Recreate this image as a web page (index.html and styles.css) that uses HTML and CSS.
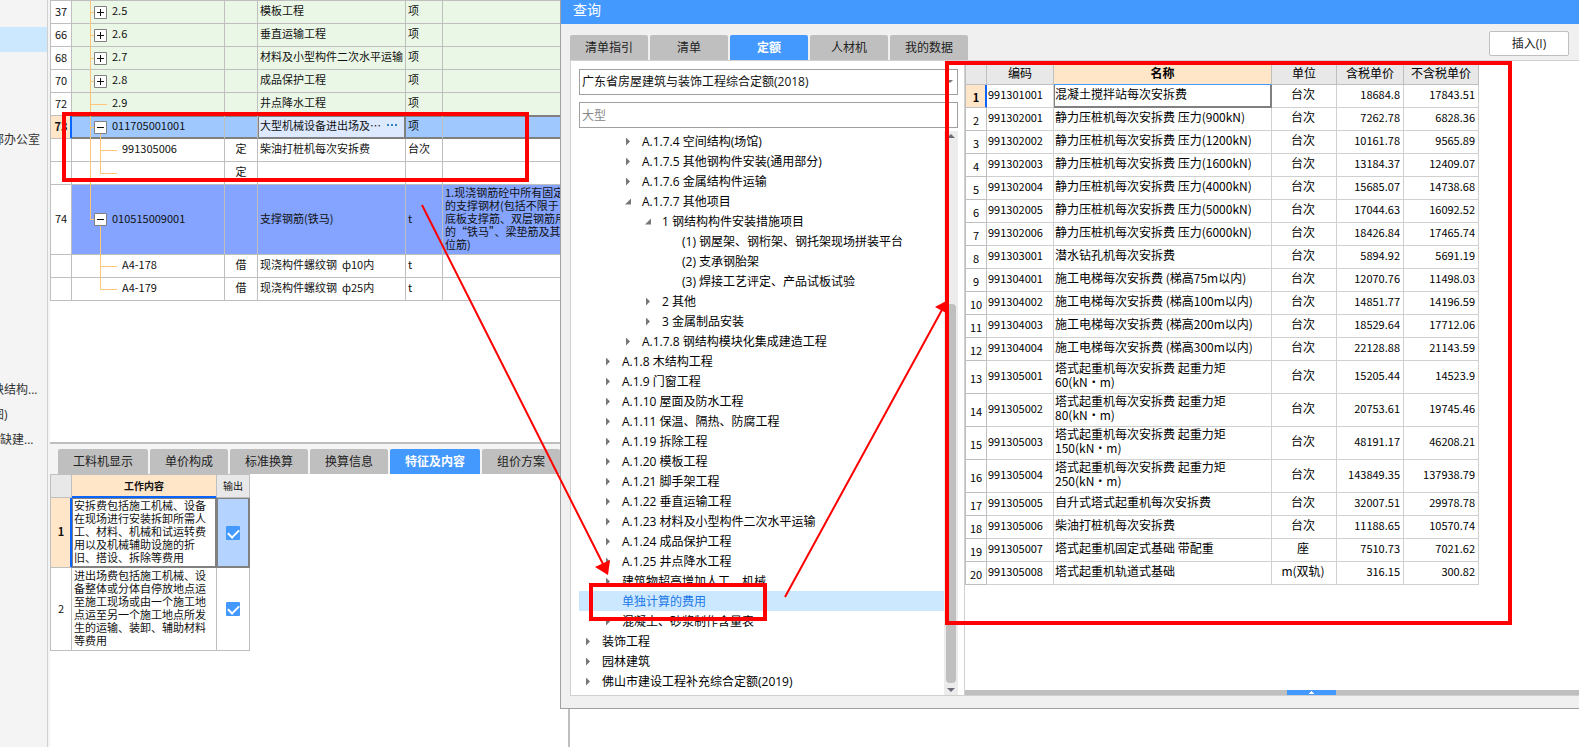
FILE: index.html
```html
<!DOCTYPE html>
<html lang="zh-CN">
<head>
<meta charset="utf-8">
<title>查询</title>
<link rel="stylesheet" href="styles.css">
</head>
<body>
<svg class="defs" aria-hidden="true">
  <symbol id="t-plus" viewBox="0 0 40 23"><path class="ln" d="M18.5 0V23M18.5 11.5H22"/><path class="bx" d="M22.5 5.5h12v12h-12z"/><path class="sg" d="M25 11.5h7M28.5 8v7"/></symbol>
  <symbol id="t-leaf" viewBox="0 0 40 23"><path class="ln" d="M18.5 0V23M18.5 11.5H35"/></symbol>
  <symbol id="t-open" viewBox="0 0 40 23"><path class="ln" d="M18.5 0V23M18.5 11.5H22M28.5 18V23"/><path class="bx" d="M22.5 5.5h12v12h-12z"/><path class="sg" d="M25 11.5h7"/></symbol>
  <symbol id="t-mid" viewBox="0 0 50 23"><path class="ln" d="M18.5 0V23M28.5 0V23M28.5 11.5H45"/></symbol>
  <symbol id="t-end" viewBox="0 0 50 23"><path class="ln" d="M18.5 0V23M28.5 0V11.5H45"/></symbol>
  <symbol id="t-tall" viewBox="0 0 40 70"><path class="ln" d="M18.5 0V34.500H22M28.5 41V70"/><path class="bx" d="M22.5 28.5h12v12h-12z"/><path class="sg" d="M25 34.5h7"/></symbol>
  <symbol id="t-sub" viewBox="0 0 50 23"><path class="ln" d="M28.5 0V23M28.5 11.5H45"/></symbol>
  <symbol id="t-last" viewBox="0 0 50 23"><path class="ln" d="M28.5 0V11.5H45"/></symbol>
</svg>

<div class="app">
  <nav class="side">
    <ul>
      <li></li><li class="on"></li><li></li><li></li><li></li>
      <li>部办公室</li><li></li><li></li><li></li><li></li>
      <li></li><li></li><li></li><li></li><li></li>
      <li>缺结构...</li><li>图)</li><li class="in">缺建...</li>
    </ul>
  </nav>

  <main class="work">
    <section class="upper">
      <table class="grid items">
        <colgroup><col class="c-no"><col class="c-code"><col class="c-type"><col class="c-name"><col class="c-unit"><col class="c-desc"></colgroup>
        <tbody>
          <tr class="green"><th>37</th><td class="tree"><div><svg class="w40"><use href="#t-plus"/></svg>2.5</div></td><td></td><td>模板工程</td><td>项</td><td></td></tr>
          <tr class="green"><th>66</th><td class="tree"><div><svg class="w40"><use href="#t-plus"/></svg>2.6</div></td><td></td><td>垂直运输工程</td><td>项</td><td></td></tr>
          <tr class="green"><th>68</th><td class="tree"><div><svg class="w40"><use href="#t-plus"/></svg>2.7</div></td><td></td><td>材料及小型构件二次水平运输</td><td>项</td><td></td></tr>
          <tr class="green"><th>70</th><td class="tree"><div><svg class="w40"><use href="#t-plus"/></svg>2.8</div></td><td></td><td>成品保护工程</td><td>项</td><td></td></tr>
          <tr class="green"><th>72</th><td class="tree"><div><svg class="w40"><use href="#t-leaf"/></svg>2.9</div></td><td></td><td>井点降水工程</td><td>项</td><td></td></tr>
          <tr class="current"><th>73</th><td class="tree"><div><svg class="w40"><use href="#t-open"/></svg>011705001001</div></td><td></td><td class="edit"><div>大型机械设备进出场及…<button type="button" class="more" aria-label="更多"><svg viewBox="0 0 11 3"><path d="M0 0h2v2H0zM4 0h2v2H4zM8 0h2v2H8z"/></svg></button></div></td><td>项</td><td></td></tr>
          <tr><th></th><td class="tree"><div><svg class="w50"><use href="#t-mid"/></svg>991305006</div></td><td>定</td><td>柴油打桩机每次安拆费</td><td>台次</td><td></td></tr>
          <tr><th></th><td class="tree"><div><svg class="w50"><use href="#t-end"/></svg></div></td><td>定</td><td></td><td></td><td></td></tr>
          <tr class="blue"><th>74</th><td class="tree"><div><svg class="w40 tall"><use href="#t-tall"/></svg>010515009001</div></td><td></td><td>支撑钢筋(铁马)</td><td>t</td><td>1.现浇钢筋砼中所有固定位置<br>的支撑钢材(包括不限于<br>底板支撑筋、双层钢筋用<br>的“铁马”、梁垫筋及其定<br>位筋)</td></tr>
          <tr><th></th><td class="tree"><div><svg class="w50"><use href="#t-sub"/></svg>A4-178</div></td><td>借</td><td>现浇构件螺纹钢 &nbsp;ф10内</td><td>t</td><td></td></tr>
          <tr><th></th><td class="tree"><div><svg class="w50"><use href="#t-last"/></svg>A4-179</div></td><td>借</td><td>现浇构件螺纹钢 &nbsp;ф25内</td><td>t</td><td></td></tr>
        </tbody>
      </table>
    </section>

    <div class="lower">
      <section class="detail">
        <div class="tabs">
          <button type="button">工料机显示</button><button type="button">单价构成</button><button type="button">标准换算</button><button type="button">换算信息</button><button type="button" class="on">特征及内容</button><button type="button">组价方案</button>
        </div>
        <table class="grid scope">
          <colgroup><col class="c-no"><col class="c-text"><col class="c-out"></colgroup>
          <thead><tr><th></th><th class="hot">工作内容</th><th>输出</th></tr></thead>
          <tbody>
            <tr class="picked"><th>1</th><td>安拆费包括施工机械、设备在现场进行安装拆卸所需人工、材料、机械和试运转费用以及机械辅助设施的折旧、搭设、拆除等费用</td><td><input type="checkbox" checked aria-label="输出 1"></td></tr>
            <tr class="second"><th>2</th><td>进出场费包括施工机械、设备整体或分体自停放地点运至施工现场或由一个施工地点运至另一个施工地点所发生的运输、装卸、辅助材料等费用</td><td><input type="checkbox" checked aria-label="输出 2"></td></tr>
          </tbody>
        </table>
      </section>
    </div>
  </main>
</div>

<div class="dialog" role="dialog" aria-labelledby="dlg-title">
  <header class="title" id="dlg-title">查询</header>
  <div class="bar">
    <div class="tabs">
      <button type="button">清单指引</button><button type="button">清单</button><button type="button" class="on">定额</button><button type="button">人材机</button><button type="button">我的数据</button>
    </div>
    <button type="button" class="insert">插入(I)</button>
  </div>
  <div class="panel">
    <div class="left">
      <div class="pick">
        <select class="field" aria-label="定额库"><option>广东省房屋建筑与装饰工程综合定额(2018)</option></select>
        <svg viewBox="0 0 6 3"><path d="M0 0h6L3 3z"/></svg>
      </div>
      <input class="field" type="text" placeholder="大型" aria-label="搜索">
      <div class="browse">
        <ul class="nodes">
          <li class="l3 shut">A.1.7.4 空间结构(场馆)</li>
          <li class="l3 shut">A.1.7.5 其他钢构件安装(通用部分)</li>
          <li class="l3 shut">A.1.7.6 金属结构件运输</li>
          <li class="l3 open">A.1.7.7 其他项目</li>
          <li class="l4 open">1 钢结构构件安装措施项目</li>
          <li class="l5">(1) 钢屋架、钢桁架、钢托架现场拼装平台</li>
          <li class="l5">(2) 支承钢胎架</li>
          <li class="l5">(3) 焊接工艺评定、产品试板试验</li>
          <li class="l4 shut">2 其他</li>
          <li class="l4 shut">3 金属制品安装</li>
          <li class="l3 shut">A.1.7.8 钢结构模块化集成建造工程</li>
          <li class="l2 shut">A.1.8 木结构工程</li>
          <li class="l2 shut">A.1.9 门窗工程</li>
          <li class="l2 shut">A.1.10 屋面及防水工程</li>
          <li class="l2 shut">A.1.11 保温、隔热、防腐工程</li>
          <li class="l2 shut">A.1.19 拆除工程</li>
          <li class="l2 shut">A.1.20 模板工程</li>
          <li class="l2 shut">A.1.21 脚手架工程</li>
          <li class="l2 shut">A.1.22 垂直运输工程</li>
          <li class="l2 shut">A.1.23 材料及小型构件二次水平运输</li>
          <li class="l2 shut">A.1.24 成品保护工程</li>
          <li class="l2 shut">A.1.25 井点降水工程</li>
          <li class="l2 shut">建筑物超高增加人工、机械</li>
          <li class="l2 on">单独计算的费用</li>
          <li class="l2 shut">混凝土、砂浆制作含量表</li>
          <li class="l1 shut">装饰工程</li>
          <li class="l1 shut">园林建筑</li>
          <li class="l1 shut">佛山市建设工程补充综合定额(2019)</li>
        </ul>
        <div class="scroll">
          <svg viewBox="0 0 8 4"><path d="M0 4h8L4 0z"/></svg>
          <div class="track"><div class="thumb"></div></div>
          <svg viewBox="0 0 8 4"><path d="M0 0h8L4 4z"/></svg>
        </div>
      </div>
    </div>
    <div class="right">
      <table class="grid quota">
        <colgroup><col class="c-no"><col class="q-code"><col class="q-name"><col class="q-unit"><col class="q-tax"><col class="q-net"></colgroup>
        <thead><tr><th></th><th>编码</th><th class="hot">名称</th><th>单位</th><th>含税单价</th><th>不含税单价</th></tr></thead>
        <tbody>
          <tr class="picked"><th>1</th><td>991301001</td><td>混凝土搅拌站每次安拆费</td><td>台次</td><td>18684.8</td><td>17843.51</td></tr>
          <tr><th>2</th><td>991302001</td><td>静力压桩机每次安拆费 压力(900kN)</td><td>台次</td><td>7262.78</td><td>6828.36</td></tr>
          <tr><th>3</th><td>991302002</td><td>静力压桩机每次安拆费 压力(1200kN)</td><td>台次</td><td>10161.78</td><td>9565.89</td></tr>
          <tr><th>4</th><td>991302003</td><td>静力压桩机每次安拆费 压力(1600kN)</td><td>台次</td><td>13184.37</td><td>12409.07</td></tr>
          <tr><th>5</th><td>991302004</td><td>静力压桩机每次安拆费 压力(4000kN)</td><td>台次</td><td>15685.07</td><td>14738.68</td></tr>
          <tr><th>6</th><td>991302005</td><td>静力压桩机每次安拆费 压力(5000kN)</td><td>台次</td><td>17044.63</td><td>16092.52</td></tr>
          <tr><th>7</th><td>991302006</td><td>静力压桩机每次安拆费 压力(6000kN)</td><td>台次</td><td>18426.84</td><td>17465.74</td></tr>
          <tr><th>8</th><td>991303001</td><td>潜水钻孔机每次安拆费</td><td>台次</td><td>5894.92</td><td>5691.19</td></tr>
          <tr><th>9</th><td>991304001</td><td>施工电梯每次安拆费 (梯高75m以内)</td><td>台次</td><td>12070.76</td><td>11498.03</td></tr>
          <tr><th>10</th><td>991304002</td><td>施工电梯每次安拆费 (梯高100m以内)</td><td>台次</td><td>14851.77</td><td>14196.59</td></tr>
          <tr><th>11</th><td>991304003</td><td>施工电梯每次安拆费 (梯高200m以内)</td><td>台次</td><td>18529.64</td><td>17712.06</td></tr>
          <tr><th>12</th><td>991304004</td><td>施工电梯每次安拆费 (梯高300m以内)</td><td>台次</td><td>22128.88</td><td>21143.59</td></tr>
          <tr class="two"><th>13</th><td>991305001</td><td>塔式起重机每次安拆费 起重力矩<br>60(kN·m)</td><td>台次</td><td>15205.44</td><td>14523.9</td></tr>
          <tr class="two"><th>14</th><td>991305002</td><td>塔式起重机每次安拆费 起重力矩<br>80(kN·m)</td><td>台次</td><td>20753.61</td><td>19745.46</td></tr>
          <tr class="two"><th>15</th><td>991305003</td><td>塔式起重机每次安拆费 起重力矩<br>150(kN·m)</td><td>台次</td><td>48191.17</td><td>46208.21</td></tr>
          <tr class="two"><th>16</th><td>991305004</td><td>塔式起重机每次安拆费 起重力矩<br>250(kN·m)</td><td>台次</td><td>143849.35</td><td>137938.79</td></tr>
          <tr><th>17</th><td>991305005</td><td>自升式塔式起重机每次安拆费</td><td>台次</td><td>32007.51</td><td>29978.78</td></tr>
          <tr><th>18</th><td>991305006</td><td>柴油打桩机每次安拆费</td><td>台次</td><td>11188.65</td><td>10570.74</td></tr>
          <tr><th>19</th><td>991305007</td><td>塔式起重机固定式基础 带配重</td><td>座</td><td>7510.73</td><td>7021.62</td></tr>
          <tr><th>20</th><td>991305008</td><td>塔式起重机轨道式基础</td><td>m(双轨)</td><td>316.15</td><td>300.82</td></tr>
        </tbody>
      </table>
      <div class="split"><button type="button" aria-label="展开"><svg viewBox="0 0 5 3"><path d="M2 0h1v1h1v1h1v1H0V2h1V1h1z"/></svg></button></div>
    </div>
  </div>
</div>

<svg class="marks" aria-hidden="true">
  <path d="M64 114H527V180H64zM591 585H765V619H591zM947 63H1510V623H947z"/>
  <path class="thin" d="M422 205L603 564M785 597L943 308"/>
  <path class="tip" d="M608 575L595 567L610 560zM948 300L935 307L948 314z"/>
</svg>
</body>
</html>
```

FILE: styles.css
```css
* { box-sizing: border-box; }

body {
  margin: 0;
  height: 100vh;
  overflow: hidden;
  position: relative;
  background: #fff;
  color: #111;
  font: 12px/20px "Open Sans", "Noto Sans CJK SC", sans-serif;
}

button, input, select { font: inherit; color: inherit; margin: 0; padding: 0; border: 0; }
ul { list-style: none; margin: 0; padding: 0; }
.defs { position: absolute; width: 0; height: 0; }
.ln { fill: none; stroke: #ffc67a; }
.bx { fill: #fff; stroke: #808080; }
.sg { fill: none; stroke: #111; }

.app { display: flex; height: 100%; background: #f4f4f4; }

/* project list, scrolled sideways */
.side { width: 48px; flex: none; border-right: 1px solid #d0d0d0; overflow: hidden; padding-top: 2px; }
.side li { height: 25px; line-height: 25px; white-space: nowrap; text-indent: -8px; color: #333; }
.side li.in { text-indent: 0; }
.side li.on { background: #cce8ff; }

.work { flex: 1; min-width: 0; margin-left: 2px; display: flex; flex-direction: column; }
.upper { flex: 442 1 0; min-height: 0; overflow: hidden; background: #fff; }
.lower { flex: 303 1 0; min-height: 0; display: flex; background: #fff; border-top: 2px solid #bfbfbf; }
.detail { width: 520px; border-right: 2px solid #bfbfbf; }

.tabs { display: flex; gap: 2px; }
.tabs button { min-width: 78px; height: 25px; padding: 0 15px; white-space: nowrap; background: #bfbfbf; color: #222; border-radius: 2px 2px 0 0; }
.tabs .on { background: #4499ff; color: #fff; font-weight: bold; }
.detail .tabs { background: #f4f4f4; padding: 5px 0 0 8px; }

/* shared grid */
.grid { table-layout: fixed; border-collapse: separate; border-spacing: 0; border-left: 1px solid #bfbfbf; font-family: "Noto Sans CJK SC", sans-serif; }
.grid th, .grid td { padding: 0 2px 3px; border-right: 1px solid #bfbfbf; border-bottom: 1px solid #bfbfbf; font-weight: normal; text-align: left; }
.grid th { text-align: center; padding: 0 0 2px; }
.c-no { width: 21px; }

.items { width: 560px; border-top: 1px solid #bfbfbf; font-size: 11px; line-height: 13px; white-space: nowrap; }
.c-code { width: 153px; }
.c-type { width: 33px; }
.c-name { width: 148px; }
.c-unit { width: 37px; }
.items tr { height: 23px; }
.items .tree { padding: 0; }
.items .tree div { display: flex; align-items: center; height: 22px; padding-bottom: 3px; }
.items .tree svg { height: 23px; margin-bottom: -4px; align-self: flex-start; flex: none; overflow: visible; }
.items .tree .tall { height: 70px; }
.items .w40 { width: 40px; }
.items .w50 { width: 50px; }
.items td:nth-child(3) { text-align: center; }
.items .green td { background: #ebf7e6; }
.items .blue { height: 70px; }
.items .blue td { background: #84a4ff; }
.items .blue .tree div { height: 69px; }
.items .current td { background: #9fc8ff; border-bottom-color: #808080; box-shadow: inset 0 1px #808080, 0 -1px #808080, inset 0 -1px #808080; }
.items .current th { background: #ffe6c8; font-weight: bold; box-shadow: inset -1px 0 #0a64ff; border-right-color: #0a64ff; }
.items .current .edit { background: #dce9ff; border-right-color: #808080; box-shadow: inset 0 0 0 1px #808080, 0 -1px #808080; }
.edit div { display: flex; align-items: center; justify-content: space-between; padding-right: 4px; }
.more { background: none; width: 12px; height: 13px; display: flex; align-items: center; }
.more svg { width: 11px; height: 3px; fill: #2f7fc8; }

.scope { width: 200px; border-top: 1px solid #bfbfbf; font-size: 11px; line-height: 13px; }
.c-text { width: 145px; }
.c-out { width: 33px; }
.scope thead tr { height: 23px; font-size: 10px; }
.grid thead th { background: #e8e8e8; }
.grid thead .hot { background: #ffe6c8; font-weight: bold; }
.scope thead .hot { border-bottom-color: #0a64ff; box-shadow: inset 0 -1px #0a64ff; }
.scope .picked { height: 70px; }
.scope .second { height: 83px; }
.scope td:last-child { text-align: center; padding: 0; }
.grid .picked th { background: #ffe6c8; font-weight: bold; border-right-color: #0a64ff; box-shadow: inset -1px 0 #0a64ff; }
.scope .picked td { border-color: #808080; box-shadow: inset 0 0 0 1px #808080; }
.scope .picked td:last-child { background: #b4d4ff; }
.scope input { appearance: none; display: block; margin: 0 auto; width: 14px; height: 14px; border-radius: 1px; background: #4499ff; }
.scope input::before { content: ""; display: block; width: 9px; height: 5px; margin: 0 auto; border: solid #fff; border-width: 0 0 2px 2px; transform: translateY(3px) rotate(-45deg); }

/* query window */
.dialog { position: absolute; top: 0; bottom: 38px; left: 560px; right: 0; display: flex; flex-direction: column; background: #f0f0f0; border: solid #a0a0a0; border-width: 0 0 1px 1px; padding-bottom: 12px; }
.title { height: 24px; line-height: 20px; padding-left: 12px; background: #4499ff; color: #fff; font-size: 14px; }
.bar { height: 36px; padding: 7px 10px 0 9px; display: flex; justify-content: space-between; align-items: flex-start; }
.bar .tabs { align-self: flex-end; }
.bar .tabs button { padding: 0; }
.insert { width: 80px; height: 25px; background: #fff; border: 1px solid #bfbfbf; border-radius: 2px; color: #222; }
.panel { flex: 1; min-height: 0; margin-left: 9px; display: flex; background: #fff; border: solid #d0d0d0; border-width: 1px 0 1px 1px; }

.left { width: 393px; flex: none; padding: 8px 6px 0 8px; display: flex; flex-direction: column; }
.field { display: block; width: 100%; height: 26px; padding: 0 2px; border: 1px solid #a0a0a0; border-radius: 0; background: #fff; appearance: none; }
.field::placeholder { color: #888; opacity: 1; }
.pick { position: relative; margin-bottom: 7px; }
.pick svg { position: absolute; right: 5px; top: 11px; width: 6px; height: 3px; fill: #777; }
.browse { flex: 1; min-height: 0; margin-top: 3px; display: flex; }
.nodes { flex: 1; color: #000; white-space: nowrap; overflow: hidden; }
.nodes li { height: 20px; line-height: 20px; padding-top: 1px; display: flex; align-items: center; }
.nodes li::before { content: ""; width: 17px; height: 8px; flex: none; }
.nodes .shut::before { background: #777; clip-path: polygon(1px 0, 5px 4px, 1px 8px); }
.nodes .open::before { background: #777; clip-path: polygon(0 7px, 6px 1px, 6px 7px); }
.nodes .l1 { padding-left: 6px; }
.nodes .l2 { padding-left: 26px; }
.nodes .l3 { padding-left: 46px; }
.nodes .l4 { padding-left: 66px; }
.nodes .l5 { padding-left: 86px; }
.nodes .on { background: #cce8ff; color: #1a78e8; }
.scroll { width: 14px; background: #ececec; display: flex; flex-direction: column; align-items: center; padding: 3px 0; }
.scroll svg { width: 8px; height: 4px; fill: #6c6c78; }
.track { flex: 1; width: 10px; margin: 4px 0 5px; display: flex; flex-direction: column; justify-content: flex-end; }
.thumb { height: 70%; background: #bfbfbf; border-radius: 4px; }

.right { flex: 1; min-width: 0; border-left: 1px solid #d0d0d0; display: flex; flex-direction: column; justify-content: space-between; }
.quota { width: 514px; font-size: 12px; line-height: 14px; color: #000; }
.q-code { width: 67px; }
.q-name { width: 218px; }
.q-unit { width: 65px; }
.q-tax { width: 67px; }
.q-net { width: 75px; }
.quota thead tr { height: 24px; }
.quota thead th { padding: 0; }
.quota thead .hot { border-bottom-color: #4499ff; }
.quota tbody tr { height: 23px; }
.quota tbody .two { height: 33px; }
.quota tbody td { border-color: #d0d0d0; padding: 0 3px 4px 1px; }
.quota tbody th { padding: 1px 0 0; }
.quota tbody th, .quota td:nth-child(2), .quota td:nth-child(n+5) { font-size: 11px; }
.quota td:nth-child(4) { text-align: center; }
.quota td:nth-child(n+5) { text-align: right; }
.quota .picked td:nth-child(3) { border-color: #808080; box-shadow: inset 0 -1px #808080, inset 1px 0 #808080, inset -1px 0 #808080; }
.split { height: 5px; background: #bfbfbf; display: flex; }
.split button { margin-left: 322px; width: 49px; height: 5px; background: #4499ff; display: flex; justify-content: center; align-items: center; }
.split svg { width: 5px; height: 3px; fill: #fff; }

/* red call-outs drawn over both windows */
.marks { position: absolute; left: 0; top: 0; width: 100%; height: 100%; pointer-events: none; fill: none; stroke: #f00; stroke-width: 4px; }
.marks .thin { stroke-width: 2px; }
.marks .tip { fill: #f00; stroke: none; }
```
